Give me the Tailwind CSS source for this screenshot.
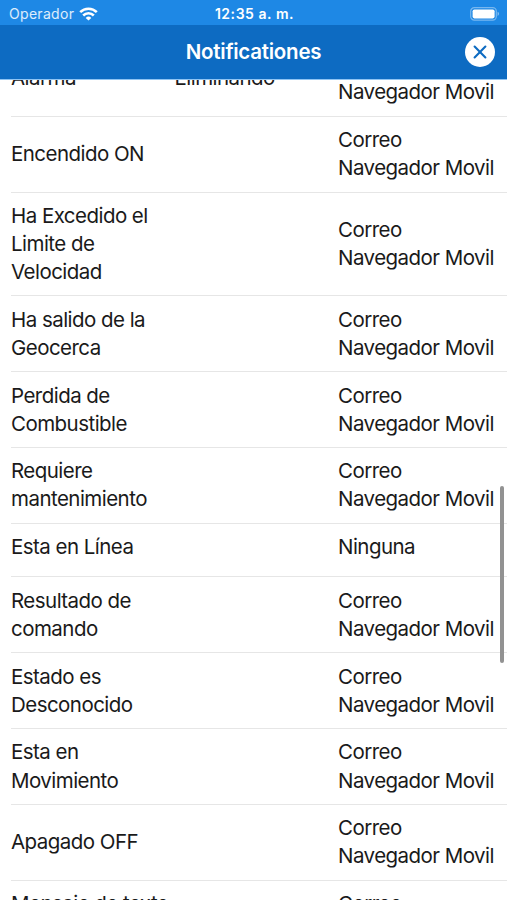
<!DOCTYPE html>
<html lang="es">
  <head>
    <meta charset="UTF-8" />
    <meta name="viewport" content="width=device-width, initial-scale=1.0" />
    <script src="https://cdn.jsdelivr.net/npm/@tailwindcss/browser@4"></script>
    <title>Notificationes</title>
  </head>
  <body class="bg-white">
    <div class="relative flex flex-col h-[900px] overflow-hidden font-['Inter',sans-serif] text-[#1a1a1a]">
      <!-- Barra de estado -->
      <div class="grid grid-cols-3 items-center h-[25px] shrink-0 bg-[#1e88e5] text-white pl-[9px] pr-[7px] pt-[2px]">
        <div class="flex items-center gap-[5px]">
          <span class="text-[14px] leading-none tracking-[0.3px] text-white/85">Operador</span>
          <svg width="19" height="14" viewBox="0 0 19 14" fill="none" stroke="#fff" stroke-width="2.6">
            <path d="M1.2 5.1a11.8 11.8 0 0 1 16.6 0" />
            <path d="M4.2 8.5a7.5 7.5 0 0 1 10.6 0" />
            <path d="M9.5 13.6 6.7 10.9a4 4 0 0 1 5.6 0z" fill="#fff" stroke="none" />
          </svg>
        </div>
        <span class="text-[14px] leading-none font-semibold tracking-[0.55px] text-center">12:35 a. m.</span>
        <div class="flex justify-end">
          <svg width="30" height="14" viewBox="0 0 30 14" fill="none">
            <rect x="0.7" y="0.7" width="25.6" height="12.4" rx="3.6" stroke="#fff" stroke-opacity="0.4" stroke-width="1.2" />
            <rect x="2.6" y="2.4" width="22" height="9" rx="1.8" fill="#fff" />
            <path d="M27.6 4.8c1.8.7 1.8 3.5 0 4.2z" fill="#fff" fill-opacity="0.5" />
          </svg>
        </div>
      </div>

      <!-- Encabezado -->
      <header class="grid grid-cols-[1fr_auto_1fr] items-center h-[54px] shrink-0 bg-[#0d6bc2] px-3">
        <h1 class="col-start-2 text-[20.5px] leading-none font-semibold tracking-[-0.25px] text-white pt-px">Notificationes</h1>
        <button class="justify-self-end flex items-center justify-center size-[30px] rounded-full bg-white" aria-label="Cerrar">
          <svg width="14" height="14" viewBox="0 0 14 14" stroke="#0d6bc2" stroke-width="2.1" stroke-linecap="round">
            <path d="M1.6 1.6l10.8 10.8M12.4 1.6L1.6 12.4" />
          </svg>
        </button>
      </header>

      <!-- Lista -->
      <main class="flex-1 min-h-0 overflow-hidden border-t border-[#8fc4f3]">
        <div id="lista" class="-mt-[39px] pl-[11px] text-[20.5px] leading-[28.1px] tracking-[-0.54px]"></div>
      </main>

      <div class="absolute right-[3px] top-[486px] w-[4px] h-[177px] rounded-full bg-[#929292]"></div>
    </div>

    <script>
      const correo = "Correo<br>Navegador Movil";
      const filas = [
        ["Alarma", "Eliminando", correo],
        ["Encendido ON", "", correo],
        ["Ha Excedido el<br>Limite de<br>Velocidad", "", correo],
        ["Ha salido de la<br>Geocerca", "", correo],
        ["Perdida de<br>Combustible", "", correo],
        ["Requiere<br>mantenimiento", "", correo],
        ["Esta en Línea", "", "Ninguna"],
        ["Resultado de<br>comando", "", correo],
        ["Estado es<br>Desconocido", "", correo],
        ["Esta en<br>Movimiento", "", correo],
        ["Apagado OFF", "", correo],
        ["Mensaje de texto<br>recibido", "", correo],
      ];

      document.getElementById("lista").innerHTML = filas
        .map((fila) => {
          // Las filas de una sola línea alinean el texto arriba
          const alinear = fila[2] === "Ninguna" ? "items-start" : "items-center";
          return `
            <div class="grid grid-cols-[163.5px_163.5px_1fr] ${alinear} min-h-[53.8px] pt-[9.4px] pb-[9.2px] border-b border-[#e6e6e6] whitespace-nowrap">
              <div>${fila[0]}</div>
              <div>${fila[1]}</div>
              <div>${fila[2]}</div>
            </div>
          `;
        })
        .join("");
    </script>
  </body>
</html>
